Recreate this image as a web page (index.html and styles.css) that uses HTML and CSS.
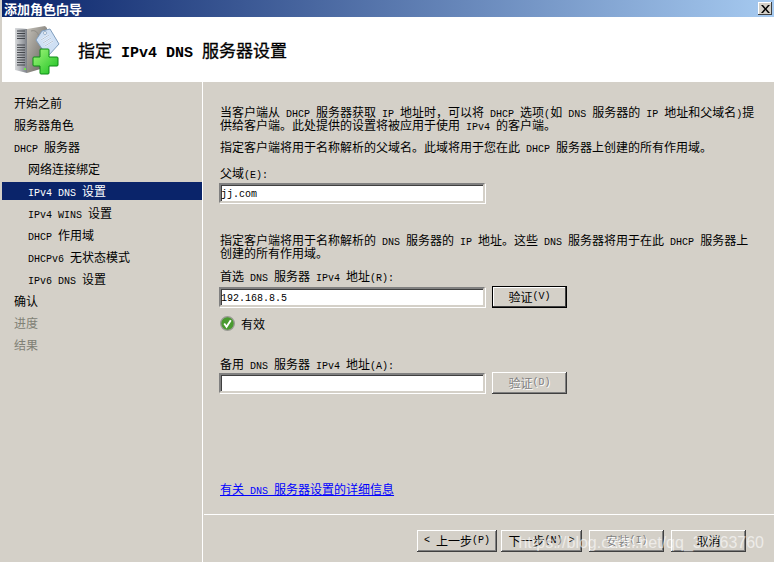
FILE: index.html
```html
<!DOCTYPE html>
<html lang="zh-CN">
<head><meta charset="UTF-8">
<title>添加角色向导</title>
<link rel="stylesheet" href="styles.css">
</head>
<body>
<div class="window">

  <div class="titlebar">
    <span class="titlebar-text">添加角色向导</span>
    <span class="close-btn">
      <svg width="9" height="8" viewBox="0 0 9 8"><path d="M0 0h2l2.500 3 2.500-3h2l-3.500 4 3.500 4h-2l-2.500-3-2.500 3h-2l3.500-4z" fill="#000"/></svg>
    </span>
  </div>

  <header class="header">
    <svg class="header-icon" width="46" height="50" viewBox="0 0 46 50">
      <defs>
        <linearGradient id="front" x1="0" x2="1" y1="0" y2="0"><stop offset="0" stop-color="#d8dadc"/><stop offset="1" stop-color="#7d8188"/></linearGradient>
        <linearGradient id="side" x1="0" x2="1" y1="0" y2="1"><stop offset="0" stop-color="#c4c0b8"/><stop offset="1" stop-color="#5f5d58"/></linearGradient>
        <linearGradient id="plus" x1="0" x2="1" y1="0" y2="1"><stop offset="0" stop-color="#a4f77c"/><stop offset="1" stop-color="#18c020"/></linearGradient>
      </defs>
      <!-- server tower -->
      <path d="M13 4 31 1 33 3V42L13 48Z" fill="url(#side)"/>
      <path d="M1 3 13 4V48L1 45Z" fill="url(#front)"/>
      <path d="M3 6h8M3 8.500h8M3 11h8M3 13.500h8" stroke="#3f4349" stroke-width="1"/>
      <path d="M3 20h8M3 22.500h8M3 25h8M3 27.500h8M3 30h8M3 32.500h8M3 35h8M3 37.500h8M3 40h8" stroke="#46494e" stroke-width="1"/>
      <rect x="10" y="43" width="2" height="2" fill="#6fe04a"/>
      <path d="M17 6c6-2 9 4 8 12" fill="none" stroke="#8e8b85" stroke-width="1"/>
      <!-- tag -->
      <path d="M28 6 36 4 45 19 35 30 33 31 22 15Z" fill="#cfe0f4" stroke="#7f9dbd" stroke-width="1"/>
      <circle cx="31" cy="8" r="1.500" fill="#fff" stroke="#6d89a8" stroke-width=".6"/>
      <path d="M27 15 35 10M29 18 37 13M31 21 39 16" stroke="#fff" stroke-width="1.500"/>
      <path d="M27 15 35 10M29 18 37 13M31 21 39 16" stroke="#5f7fa5" stroke-width=".5"/>
      <!-- plus -->
      <path d="M27 24h7a1 1 0 0 1 1 1v7h8a1 1 0 0 1 1 1v7a1 1 0 0 1-1 1h-8v7a1 1 0 0 1-1 1h-7a1 1 0 0 1-1-1v-7h-6a1 1 0 0 1-1-1v-7a1 1 0 0 1 1-1h6v-7a1 1 0 0 1 1-1z" fill="url(#plus)" stroke="#0c8a14" stroke-width="1"/>
    </svg>
    <h1 class="header-title">指定<span class="l"> IPv4 DNS </span>服务器设置</h1>
  </header>

  <div class="body">
    <nav class="sidebar">
      <div class="step">开始之前</div>
      <div class="step">服务器角色</div>
      <div class="step"><span class="l">DHCP </span>服务器</div>
      <div class="step sub">网络连接绑定</div>
      <div class="step sub selected"><span class="l">IPv4 DNS </span>设置</div>
      <div class="step sub"><span class="l">IPv4 WINS </span>设置</div>
      <div class="step sub"><span class="l">DHCP </span>作用域</div>
      <div class="step sub"><span class="l">DHCPv6 </span>无状态模式</div>
      <div class="step sub"><span class="l">IPv6 DNS </span>设置</div>
      <div class="step">确认</div>
      <div class="step off">进度</div>
      <div class="step off">结果</div>
    </nav>

    <div class="panel">
      <main class="content">
        <p class="text">当客户端从<span class="l"> DHCP </span>服务器获取<span class="l"> IP </span>地址时，可以将<span class="l"> DHCP </span>选项<span class="l">(</span>如<span class="l"> DNS </span>服务器的<span class="l"> IP </span>地址和父域名<span class="l">)</span>提<br>供给客户端。此处提供的设置将被应用于使用<span class="l"> IPv4 </span>的客户端。</p>
        <p class="text gap-para">指定客户端将用于名称解析的父域名。此域将用于您在此<span class="l"> DHCP </span>服务器上创建的所有作用域。</p>
        <label class="text gap-domain">父域<span class="l">(E):</span></label>
        <div class="field-row gap-input">
          <div class="input"><span class="l">jj.com</span></div>
        </div>

        <p class="text gap-section">指定客户端将用于名称解析的<span class="l"> DNS </span>服务器的<span class="l"> IP </span>地址。这些<span class="l"> DNS </span>服务器将用于在此<span class="l"> DHCP </span>服务器上<br>创建的所有作用域。</p>
        <label class="text gap-first">首选<span class="l"> DNS </span>服务器<span class="l"> IPv4 </span>地址<span class="l">(R):</span></label>
        <div class="field-row gap-row">
          <div class="input"><span class="l">192.168.8.5</span></div>
          <div class="btn btn-default btn-check">验证<span class="l">(V)</span></div>
        </div>
        <div class="valid">
          <svg width="15" height="15" viewBox="0 0 16 16">
            <circle cx="8" cy="8" r="7.300" fill="#4a9a30" stroke="#9a9a94" stroke-width="1.400"/>
            <path d="M4.500 8 7 11.500 11.500 4.500" fill="none" stroke="#fff" stroke-width="2"/>
          </svg>
          <span>有效</span>
        </div>
        <label class="text gap-second">备用<span class="l"> DNS </span>服务器<span class="l"> IPv4 </span>地址<span class="l">(A):</span></label>
        <div class="field-row gap-row2">
          <div class="input"></div>
          <div class="btn btn-off btn-check">验证<span class="l">(D)</span></div>
        </div>
        <a class="link" href="#">有关<span class="l"> DNS </span>服务器设置的详细信息</a>
      </main>

      <footer class="footer">
        <div class="btn btn-back"><span class="l">&lt; </span>上一步<span class="l">(P)</span></div>
        <div class="btn btn-next">下一步<span class="l">(N) &gt;</span></div>
        <div class="btn btn-off btn-wide">安装<span class="l">(I)</span></div>
        <div class="btn btn-wide">取消</div>
      </footer>
    </div>
  </div>

  <div class="watermark">https://blog.csdn.net/qq_37763760</div>
</div>
</body>
</html>
```

FILE: styles.css
```css
*,*::before,*::after{box-sizing:border-box;margin:0;padding:0}
body{
  width:774px;
  height:562px;
  overflow:hidden;
  font-family:"Noto Sans CJK SC",sans-serif;
  font-size:12px;
  color:#000;
  background:#d4d0c8;
}

/* half-width latin, same cell as the 12px CJK text */
.l{
  font-family:"Liberation Mono",monospace;
  font-size:10px;
  line-height:0;
}

.window{
  position:relative;
  height:562px;
  display:flex;
  flex-direction:column;
  border-left:2px solid #d4d0c8;
}

/* === TITLE BAR === */
.titlebar{
  height:17px;
  flex:none;
  display:flex;
  justify-content:space-between;
  align-items:center;
  padding:0 2px;
  background:linear-gradient(90deg,#0a246a 0%,#a6caf0 100%);
}
.titlebar-text{color:#fff;font-size:13px;font-weight:700;line-height:17px}
.close-btn{
  width:14px;
  height:13px;
  display:flex;
  justify-content:center;
  align-items:center;
  background:#d4d0c8;
  box-shadow:inset -1px -1px #404040,inset 1px 1px #fff;
}

/* === HEADER === */
.header{
  height:65px;
  flex:none;
  display:flex;
  align-items:center;
  padding-left:12px;
  background:#fff;
}
.header-icon{flex:none;margin-right:18px}
.header-title{font-size:17px;font-weight:400;line-height:22px;-webkit-text-stroke:.3px #000}
.header-title .l{font-size:15px;font-weight:700;-webkit-text-stroke:0}

/* === BODY === */
.body{flex:1;display:flex;min-height:0}
.sidebar{
  width:201px;
  flex:none;
  padding-top:12px;
  border-right:1px solid #fff;
}
.step{
  height:18px;
  margin-bottom:4px;
  padding-left:12px;
  line-height:17px;
}
.step.sub{padding-left:26px}
.step.selected{background:#0a246a;color:#fff}
.step.off{color:#808075}

.panel{flex:1;display:flex;flex-direction:column;margin-left:1px}
.content{
  flex:1;
  display:flex;
  flex-direction:column;
  align-items:flex-start;
  padding:23px 0 0 15px;
}
.text{display:block;line-height:13px;padding-left:1px;white-space:nowrap}
.gap-para{margin-top:9px}
.gap-domain{margin-top:13px}
.gap-input{margin-top:4px}
.gap-section{margin-top:30px}
.gap-first{margin-top:10px}
.gap-row{margin-top:4px}
.gap-second{margin-top:26px}
.gap-row2{margin-top:2px}

.field-row{display:flex;align-items:center;gap:7px}
.input{
  width:266px;
  height:20px;
  padding-left:0;
  line-height:13px;
  background:#fff;
  border:2px solid;
  border-color:#808080 #d4d0c8 #d4d0c8 #808080;
  box-shadow:inset 1px 1px #404040,1px 1px #fff;
}

/* === BUTTONS === */
.btn{
  height:22px;
  display:flex;
  justify-content:center;
  align-items:center;
  padding-bottom:1px;
  background:#d4d0c8;
  box-shadow:inset -1px -1px #404040,inset 1px 1px #fff,inset -2px -2px #808080;
  white-space:pre;
}
.btn-check{width:75px}
.btn-default{box-shadow:inset 0 0 0 1px #000,inset -2px -2px #404040,inset 2px 2px #fff}
.btn-off{color:#808080;text-shadow:1px 1px #fff}
.btn-back{width:80px}
.btn-next{width:81px;margin-left:4px}
.btn-wide{width:75px;margin-left:7px}

.valid{
  display:flex;
  align-items:center;
  gap:6px;
  margin:7px 0 0 1px;
  height:16px;
}
.link{
  margin:88px 0 0 1px;
  line-height:13px;
  color:#0000ff;
  text-decoration:underline;
}

/* === FOOTER === */
.footer{
  height:48px;
  flex:none;
  display:flex;
  justify-content:flex-end;
  padding:15px 28px 0 0;
  border-top:1px solid #fff;
}

.watermark{
  position:absolute;
  right:10px;
  bottom:9px;
  font-family:"Liberation Sans",sans-serif;
  font-size:16px;
  line-height:20px;
  color:rgba(255,255,255,.6);
  pointer-events:none;
}
```
